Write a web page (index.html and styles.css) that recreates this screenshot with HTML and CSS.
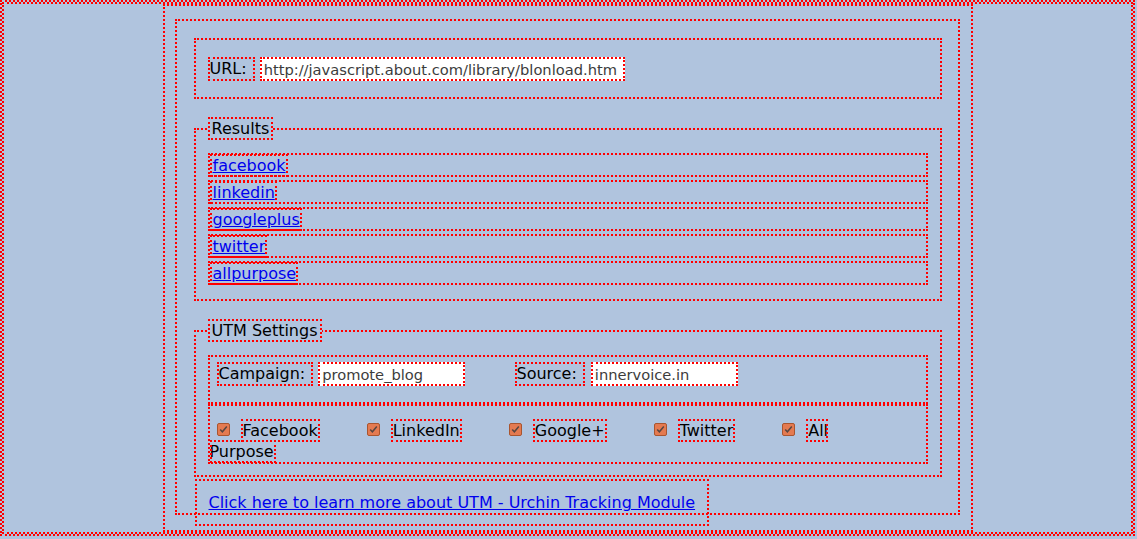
FILE: index.html
```html
<!DOCTYPE html>
<html lang="en">
<head>
<meta charset="utf-8">
<title>UTM Link Builder</title>
<link rel="stylesheet" href="styles.css">
</head>
<body>
<div class="page">
  <div class="panel">
    <fieldset class="url-box">
      <div class="field-line">
        <label class="tag" for="url">URL:</label>
        <input id="url" class="text url" type="text" value="http://javascript.about.com/library/blonload.htm">
      </div>
    </fieldset>

    <fieldset class="results">
      <legend>Results</legend>
      <div class="result"><a href="#">facebook</a></div>
      <div class="result"><a href="#">linkedin</a></div>
      <div class="result"><a href="#">googleplus</a></div>
      <div class="result"><a href="#">twitter</a></div>
      <div class="result"><a href="#">allpurpose</a></div>
    </fieldset>

    <fieldset class="utm">
      <legend>UTM Settings</legend>
      <div class="utm-fields">
        <span class="group"><label class="tag" for="campaign">Campaign:</label><input id="campaign" class="text short" type="text" value="promote_blog"></span>
        <span class="group"><label class="tag" for="source">Source:</label><input id="source" class="text short source" type="text" value="innervoice.in"></span>
      </div>
      <div class="utm-checks"><input id="c-fb" type="checkbox" checked><label for="c-fb">Facebook</label><input id="c-li" type="checkbox" checked><label for="c-li">LinkedIn</label><input id="c-gp" type="checkbox" checked><label for="c-gp">Google+</label><input id="c-tw" type="checkbox" checked><label for="c-tw">Twitter</label><input id="c-all" type="checkbox" checked><label for="c-all">All Purpose</label></div>
    </fieldset>

    <p class="more"><a href="#">Click here to learn more about UTM - Urchin Tracking Module</a></p>
  </div>
</div>
</body>
</html>
```
FILE: styles.css
```css
html {
  margin: 0 2px 0 0;
}

body {
  margin: 0;
  background: #b0c4de;
  color: #000;
  font-family: "DejaVu Sans", "Liberation Sans", sans-serif;
  font-size: 16px;
}

/* debug-style dotted outlines, drawn inside a reserved 2px border */
html,
body,
.page,
.panel,
legend,
.tag,
.result,
.result a,
.utm-fields,
.utm-checks,
.utm-checks label,
.more a {
  border: 2px solid transparent;
  outline: 2px dotted red;
  outline-offset: -2px;
}

a {
  color: #0000ee;
}

.page {
  width: 785px;
  margin: 0 auto;
  padding: 13px 11px 15px 10px;
}

.panel {
  padding: 17px 14px 0 15px;
}

fieldset {
  border: 2px dotted red;
  margin: 0 2px 18px;
  padding: 13px 12px 11px;
}

legend {
  padding: 0 2px;
  line-height: 19px;
}

.url-box {
  padding: 17px 12px 16px;
}

.field-line {
  display: flex;
  align-items: center;
}

.tag {
  padding-right: 6px;
  line-height: 20px;
}

.text {
  box-sizing: border-box;
  height: 24px;
  margin: 0 0 0 5px;
  padding: 1px 2px;
  border: 2px dotted red;
  background: #fff;
  color: #3c3c3c;
  font-family: "DejaVu Sans", "Liberation Sans", sans-serif;
  font-size: 14.667px;
}

.url {
  width: 365px;
}

.short {
  width: 147px;
}

.source {
  margin-left: 6px;
}

.result {
  padding-top: 2px;
  line-height: 18px;
  margin-bottom: 3px;
}

.result a {
  padding-left: 1px;
}

.utm {
  padding: 13px 12px 11px;
  margin-bottom: 16px;
}

.utm-fields {
  display: flex;
  padding: 5px 0 16px 7px;
}

.group {
  display: flex;
  align-items: center;
  width: 298px;
}

.utm-checks {
  padding-top: 14px;
  line-height: 21px;
}

.utm-checks input {
  appearance: none;
  -webkit-appearance: none;
  box-sizing: border-box;
  width: 13px;
  height: 13px;
  margin: 0 3px 0 7px;
  vertical-align: baseline;
  border: 1px solid #a9552f;
  border-radius: 2px;
  background-color: #e47a50;
  background-image: url("data:image/svg+xml,%3Csvg xmlns='http://www.w3.org/2000/svg' viewBox='0 0 11 11'%3E%3Cpath d='M2.2 5.4 L4.4 7.8 L8.8 2.6' fill='none' stroke='%23574640' stroke-width='1.5'/%3E%3C/svg%3E");
  background-size: 11px 11px;
  background-repeat: no-repeat;
}

.utm-checks label {
  margin: 0 40px 0 8px;
}

.more {
  margin: 0;
  padding-left: 3px;
  line-height: 20px;
}

.more a {
  padding: 12px;
}
```
